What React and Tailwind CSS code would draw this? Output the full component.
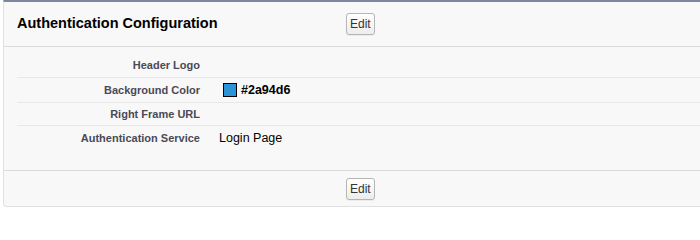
import React from 'react'

const ROWS = [
  { label: 'Header Logo', value: null, h: 'h-[31px] pt-[6px]' },
  { label: 'Background Color', value: 'color', color: '#2a94d6', h: 'h-[25px]' },
  { label: 'Right Frame URL', value: null, h: 'h-[23px]' },
  { label: 'Authentication Service', value: 'Login Page', h: 'h-[24px]' },
]

function EditButton() {
  return (
    <button className="h-[22px] px-[3px] rounded-[3px] border border-[#b5b5b5] bg-gradient-to-b from-white to-[#ededed] text-[12px] leading-none text-[#333] shadow-[0_1px_0_rgba(0,0,0,0.05)]">
      Edit
    </button>
  )
}

export default function App() {
  return (
    <div className="w-[700px] h-[222px] bg-white" style={{ fontFamily: '"Liberation Sans", Arial, sans-serif' }}>
      <div className="ml-[3px] bg-[#f8f8f8] border-t-2 border-t-[#7b879a] border-l border-b border-l-[#e0e0e0] border-b-[#e0e0e0] rounded-bl-[4px]">
        {/* header */}
        <div className="h-[45px] flex items-center border-b border-[#dbdbdb]">
          <h2 className="w-[342px] pl-[13px] text-[14.5px] font-bold text-black">Authentication Configuration</h2>
          <EditButton />
        </div>

        {/* detail rows */}
        <div className="pb-[20px] border-b border-[#dbdbdb]">
          <div className="ml-[13px]">
            {ROWS.map((r, i) => (
              <div key={r.label}
                className={`flex items-center ${r.h} ${i < ROWS.length - 1 ? 'border-b border-[#e8e8e8]' : ''}`}>
                <div className="w-[183px] text-right text-[11px] font-bold text-[#4a4a56]">{r.label}</div>
                <div className="pl-[19px] text-[12.5px] text-black">
                  {r.value === 'color' ? (
                    <span className="flex items-center ml-[4px]">
                      <span className="inline-block w-[14px] h-[14px] border border-black" style={{ background: r.color }} />
                      <span className="ml-[4px] font-bold">{r.color}</span>
                    </span>
                  ) : r.value}
                </div>
              </div>
            ))}
          </div>
        </div>

        {/* footer */}
        <div className="h-[35px] flex items-center">
          <div className="w-[342px]" />
          <EditButton />
        </div>
      </div>
    </div>
  )
}
